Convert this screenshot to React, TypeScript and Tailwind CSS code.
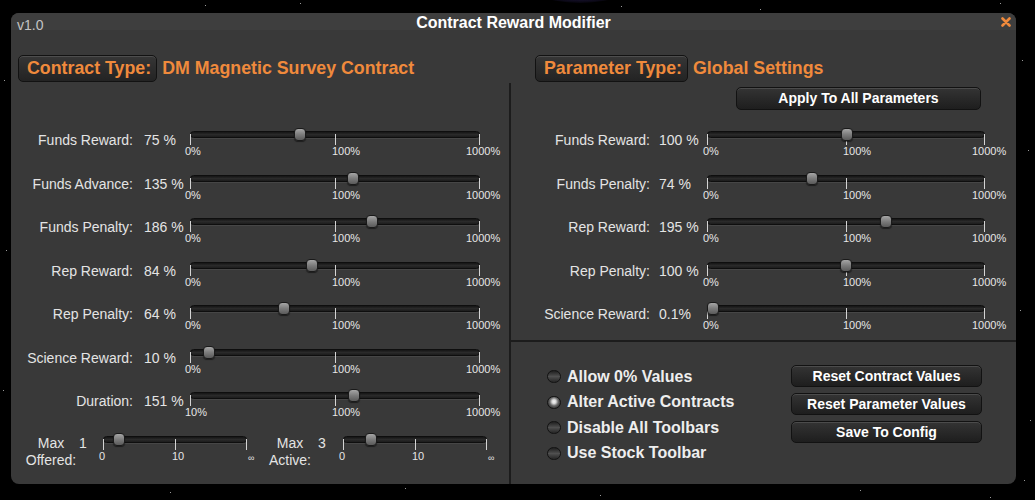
import React from "react";

type Variant = "L" | "R" | "S";

const SLIDERS: Record<Variant, { w: string; ticks: number[]; labels: { t: string; x: number }[] }> = {
  L: { w: "w-[290px]", ticks: [0, 145, 289], labels: [{ t: "0%", x: -5 }, { t: "100%", x: 142 }, { t: "1000%", x: 276 }] },
  R: { w: "w-[278px]", ticks: [0, 139, 277], labels: [{ t: "0%", x: -4 }, { t: "100%", x: 136 }, { t: "1000%", x: 265 }] },
  S: { w: "w-[144px]", ticks: [0, 72, 143], labels: [{ t: "0", x: -4 }, { t: "10", x: 69 }, { t: "∞", x: 145 }] },
};

function Slider({ v, thumb, min }: { v: Variant; thumb: number; min?: string }) {
  const cfg = SLIDERS[v];
  return (
    <div className={`relative h-full shrink-0 ${cfg.w}`}>
      <div className="absolute left-0 right-0 top-[9px] h-[7px] rounded-full border border-[#0e0e0e] bg-gradient-to-b from-[#151515] via-[#2a2a2a] to-[#1c1c1c] shadow-[0_1px_0_rgba(255,255,255,0.07)]" />
      {cfg.ticks.map((t, i) => (
        <div key={i} className="absolute top-[12px] h-[11px] w-px bg-[#d4d4d4]" style={{ left: t }} />
      ))}
      <div
        className="absolute top-[6px] h-[13px] w-[12px] rounded-[4px] border border-[#1a1a1a] bg-gradient-to-b from-[#a6a6a6] via-[#7c7c7c] to-[#5a5a5a] shadow-[0_1px_1px_rgba(0,0,0,0.5)]"
        style={{ left: thumb - 6 }}
      />
      {cfg.labels.map((l, i) => (
        <span
          key={i}
          className={`absolute leading-[13px] text-[#e6e6e6] whitespace-nowrap ${v === "S" && i === 2 ? "top-[25px] text-[9px]" : "top-[23px] text-[11px]"}`}
          style={{ left: l.x }}
        >
          {i === 0 && min ? min : l.t}
        </span>
      ))}
    </div>
  );
}

const leftRows = [
  { label: "Funds Reward:", value: "75 %", thumb: 110 },
  { label: "Funds Advance:", value: "135 %", thumb: 163 },
  { label: "Funds Penalty:", value: "186 %", thumb: 182 },
  { label: "Rep Reward:", value: "84 %", thumb: 122 },
  { label: "Rep Penalty:", value: "64 %", thumb: 94 },
  { label: "Science Reward:", value: "10 %", thumb: 19 },
  { label: "Duration:", value: "151 %", thumb: 164, min: "10%" },
];

const rightRows = [
  { label: "Funds Reward:", value: "100 %", thumb: 140 },
  { label: "Funds Penalty:", value: "74 %", thumb: 105 },
  { label: "Rep Reward:", value: "195 %", thumb: 179 },
  { label: "Rep Penalty:", value: "100 %", thumb: 139 },
  { label: "Science Reward:", value: "0.1%", thumb: 6 },
];

function Btn({ children, className }: { children: React.ReactNode; className: string }) {
  return (
    <div
      className={`flex items-center justify-center rounded-[5px] border border-[#121212] bg-gradient-to-b from-[#343434] to-[#1e1e1e] text-[14px] font-bold text-white shadow-[inset_0_1px_0_rgba(255,255,255,0.12)] ${className}`}
    >
      {children}
    </div>
  );
}

function HeaderBtn({ children }: { children: React.ReactNode }) {
  return (
    <div className="flex h-[27px] items-center rounded-[5px] border border-[#121212] bg-gradient-to-b from-[#363636] to-[#232323] pl-[8px] pr-[5px] text-[17.8px] font-bold text-[#f08a3c] shadow-[inset_0_1px_0_rgba(255,255,255,0.12)]">
      {children}
    </div>
  );
}

function Check({ on, label }: { on?: boolean; label: string }) {
  return (
    <div className="flex h-[25.5px] items-center">
      <div
        className={`h-[13px] w-[14px] rounded-full border border-[#121212] ${
          on
            ? "bg-[radial-gradient(circle_at_50%_42%,#f4f4f4_0,#d8d8d8_22%,#6a6a6a_48%,#2a2a2a_80%)]"
            : "bg-gradient-to-b from-[#202020] via-[#505050] to-[#262626]"
        }`}
      />
      <span className="ml-[6px] text-[16px] font-bold text-[#eeeeee]">{label}</span>
    </div>
  );
}

const stars = [
  [205, 5], [300, 3], [621, 6], [760, 9], [1000, 3], [1022, 60], [1028, 150], [1020, 310], [1030, 420],
  [4, 80], [6, 250], [3, 390], [170, 492], [405, 488], [600, 495], [860, 490], [990, 497], [1024, 480],
];

export default function App() {
  return (
    <div className="relative h-[500px] w-[1035px] overflow-hidden bg-black pl-[11px] pt-[13px] font-['Liberation_Sans',Arial,sans-serif] antialiased">
      <div className="absolute left-[525px] top-[-40px] h-[43px] w-[110px] rounded-[50%] bg-[radial-gradient(ellipse_at_center,#3e3278_0%,#221a44_50%,transparent_75%)]" />
      {stars.map(([x, y], i) => (
        <div key={i} className="absolute h-px w-px bg-[#9a9a9a]" style={{ left: x, top: y }} />
      ))}
      <div className="relative flex h-[471px] w-[1005px] flex-col overflow-hidden rounded-[8px] bg-[#393939]">
        {/* title bar */}
        <div className="relative flex h-[17px] shrink-0 items-center justify-center bg-[#3e3e3e]">
          <span className="absolute left-[6px] top-[5px] text-[14px] leading-[14px] text-[#c4c4c4]">v1.0</span>
          <span className="pt-[1px] text-[16px] font-bold leading-[17px] text-white">Contract Reward Modifier</span>
          <svg className="absolute right-[5px] top-[4px]" width="10" height="10" viewBox="0 0 10 10">
            <path d="M1.5 1.5 L8.5 8.5 M8.5 1.5 L1.5 8.5" stroke="#f08a3c" strokeWidth="2.6" strokeLinecap="round" />
          </svg>
        </div>

        <div className="flex flex-1">
          {/* left column */}
          <div className="flex w-[498px] shrink-0 flex-col pt-[25px]">
            <div className="flex items-center pl-[7px]">
              <HeaderBtn>Contract Type:</HeaderBtn>
              <span className="ml-[5px] text-[17.8px] font-bold text-[#f08a3c]">DM Magnetic Survey Contract</span>
            </div>
            <div className="mt-[40px] flex flex-col">
              {leftRows.map((r) => (
                <div key={r.label} className="flex h-[43.5px] text-[14px] leading-[20px] text-[#e4e4e4]">
                  <div className="mt-[8px] w-[122px] text-right">{r.label}</div>
                  <div className="ml-[11px] mt-[8px] w-[46px] whitespace-nowrap">{r.value}</div>
                  <Slider v="L" thumb={r.thumb} min={r.min} />
                </div>
              ))}
              <div className="flex h-[44px] text-[14px] text-[#e4e4e4]">
                <div className="ml-[14px] mt-[8.5px] w-[52px] text-center leading-[17px]">
                  Max
                  <br />
                  Offered:
                </div>
                <div className="ml-[2px] mt-[8.5px] w-[24px] leading-[17px]">1</div>
                <Slider v="S" thumb={16} />
                <div className="ml-[20px] mt-[8.5px] w-[46px] text-center leading-[17px]">
                  Max
                  <br />
                  Active:
                </div>
                <div className="ml-[5px] mt-[8.5px] w-[25px] leading-[17px]">3</div>
                <Slider v="S" thumb={28} />
              </div>
            </div>
          </div>

          {/* vertical divider */}
          <div className="mt-[53px] w-[2px] shrink-0 bg-[#1c1c1c]" />

          {/* right column */}
          <div className="flex flex-1 flex-col">
            <div className="flex h-[310px] flex-col pt-[25px]">
              <div className="flex items-center pl-[24px]">
                <HeaderBtn>Parameter Type:</HeaderBtn>
                <span className="ml-[5px] text-[17.8px] font-bold text-[#f08a3c]">Global Settings</span>
              </div>
              <Btn className="ml-[225px] mt-[5px] h-[23px] w-[245px]">Apply To All Parameters</Btn>
              <div className="mt-[12px] flex flex-col">
                {rightRows.map((r) => (
                  <div key={r.label} className="flex h-[43.5px] text-[14px] leading-[20px] text-[#e4e4e4]">
                    <div className="mt-[8px] w-[139px] text-right">{r.label}</div>
                    <div className="ml-[9px] mt-[8px] w-[48px] whitespace-nowrap">{r.value}</div>
                    <Slider v="R" thumb={r.thumb} />
                  </div>
                ))}
              </div>
            </div>
            <div className="h-[2px] shrink-0 bg-[#1c1c1c]" />
            <div className="flex pl-[36px] pt-[22px]">
              <div className="flex w-[244px] flex-col">
                <Check label="Allow 0% Values" />
                <Check on label="Alter Active Contracts" />
                <Check label="Disable All Toolbars" />
                <Check label="Use Stock Toolbar" />
              </div>
              <div className="mt-[1px] flex w-[191px] flex-col gap-[6px]">
                <Btn className="h-[22px]">Reset Contract Values</Btn>
                <Btn className="h-[22px]">Reset Parameter Values</Btn>
                <Btn className="h-[22px]">Save To Config</Btn>
              </div>
            </div>
          </div>
        </div>
      </div>
    </div>
  );
}
